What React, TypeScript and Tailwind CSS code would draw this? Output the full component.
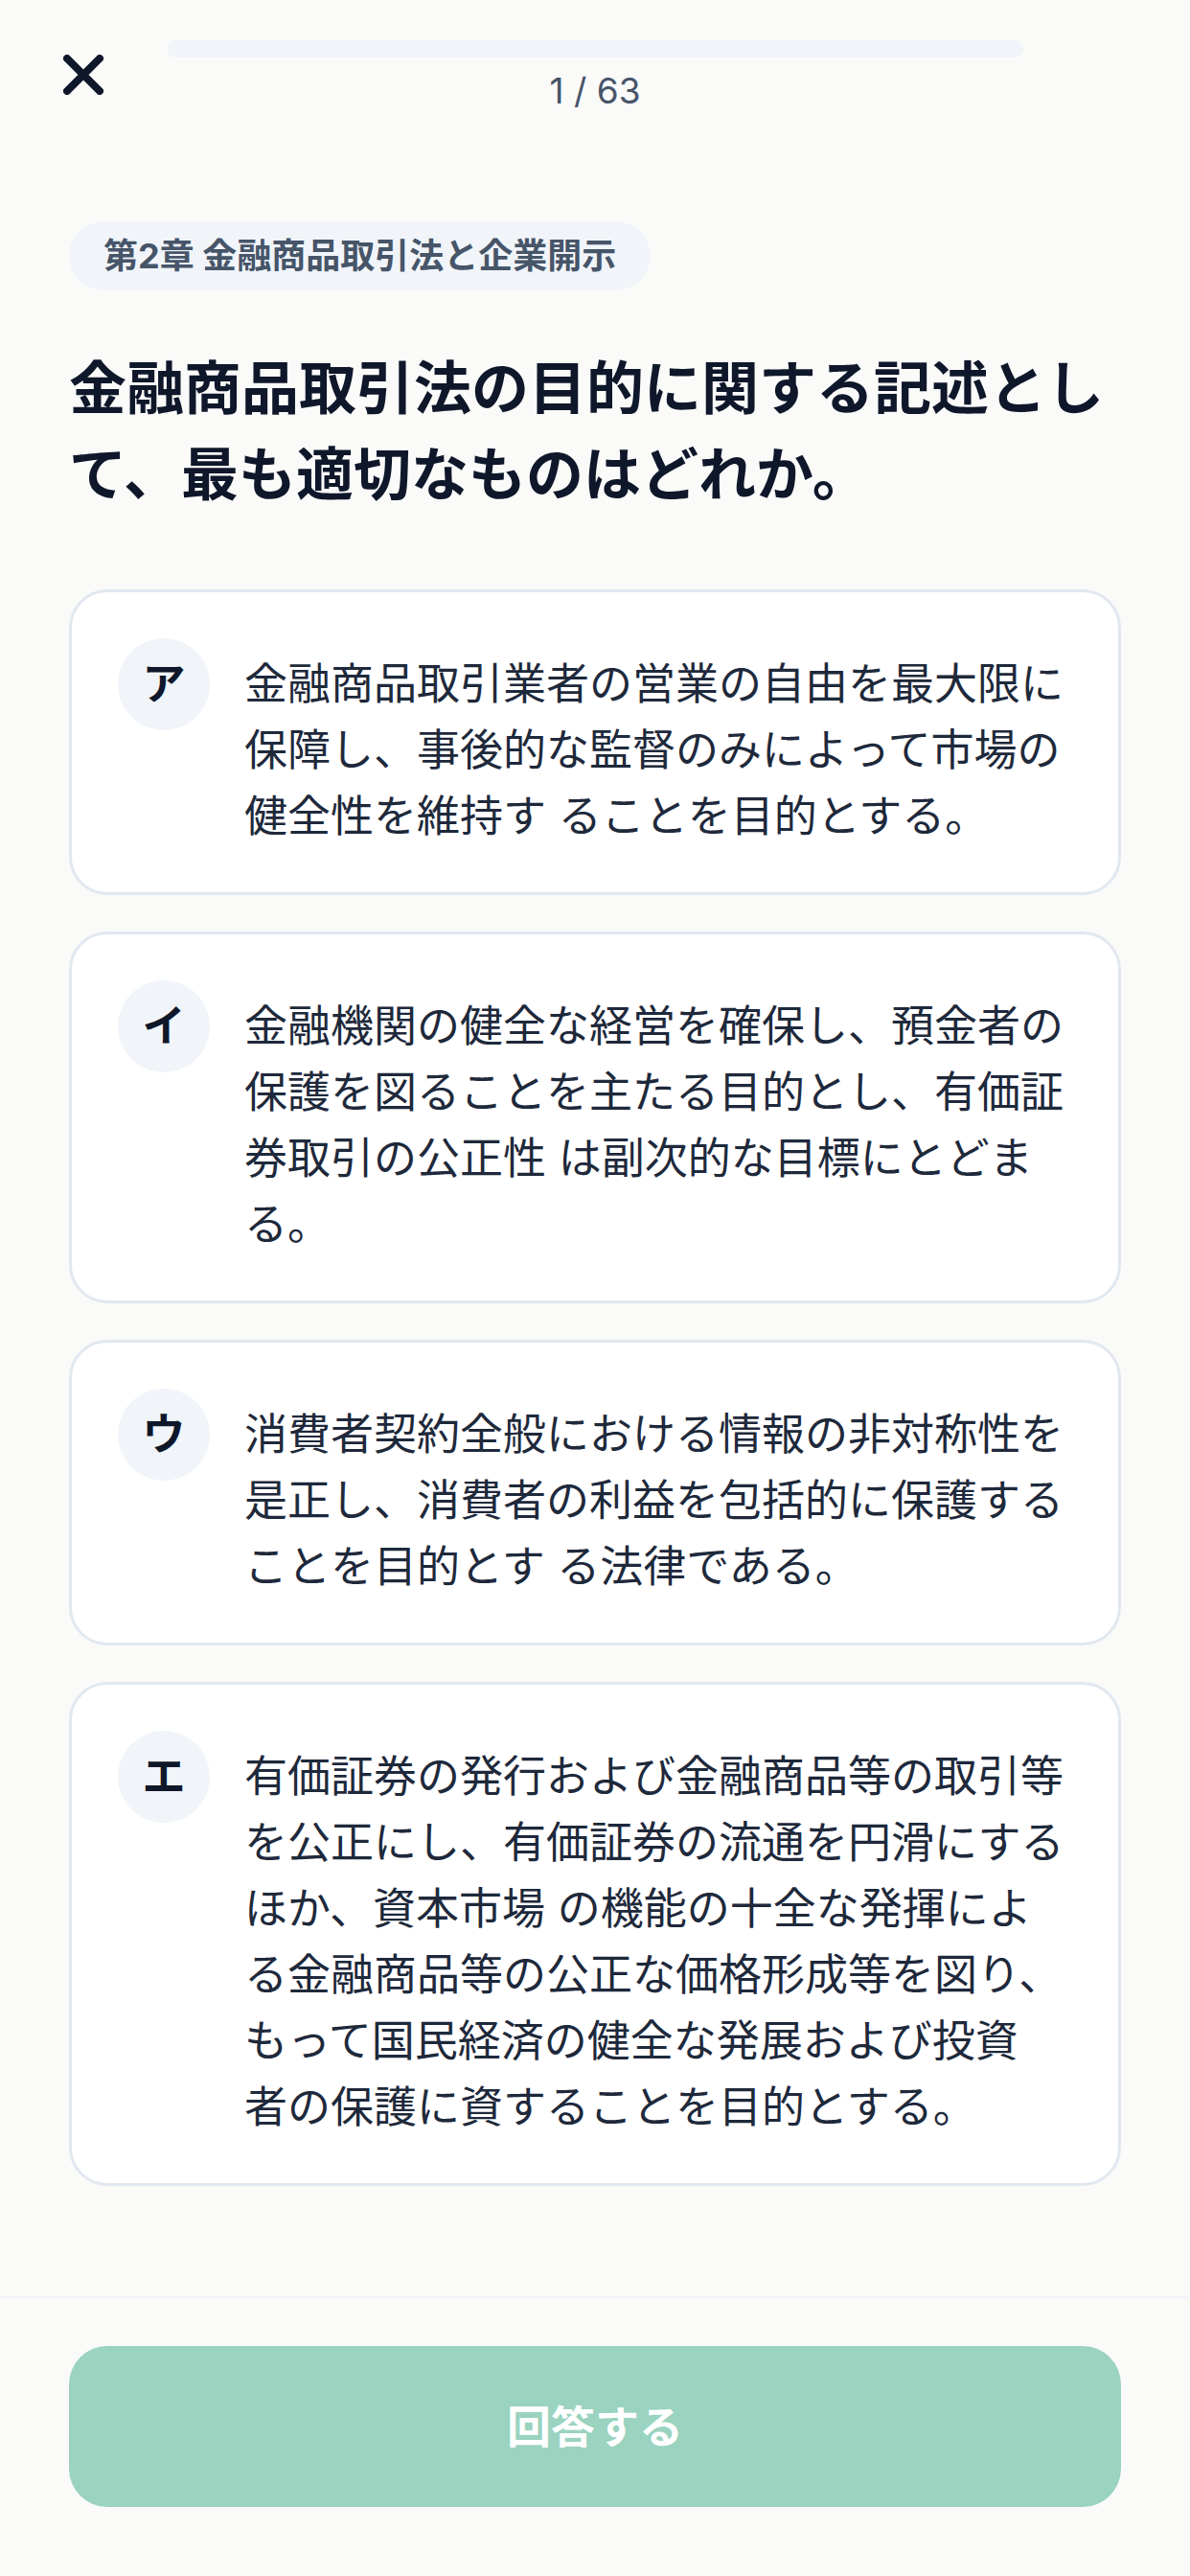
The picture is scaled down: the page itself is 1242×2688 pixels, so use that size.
import React from "react";

type Choice = {
  label: string;
  lines: string[];
};

const choices: Choice[] = [
  {
    label: "ア",
    lines: [
      "金融商品取引業者の営業の自由を最大限に",
      "保障し、事後的な監督のみによって市場の",
      "健全性を維持す ることを目的とする。",
    ],
  },
  {
    label: "イ",
    lines: [
      "金融機関の健全な経営を確保し、預金者の",
      "保護を図ることを主たる目的とし、有価証",
      "券取引の公正性 は副次的な目標にとどま",
      "る。",
    ],
  },
  {
    label: "ウ",
    lines: [
      "消費者契約全般における情報の非対称性を",
      "是正し、消費者の利益を包括的に保護する",
      "ことを目的とす る法律である。",
    ],
  },
  {
    label: "エ",
    lines: [
      "有価証券の発行および金融商品等の取引等",
      "を公正にし、有価証券の流通を円滑にする",
      "ほか、資本市場 の機能の十全な発揮によ",
      "る金融商品等の公正な価格形成等を図り、",
      "もって国民経済の健全な発展および投資",
      "者の保護に資することを目的とする。",
    ],
  },
];

const CloseIcon = () => (
  <svg width="42" height="42" viewBox="0 0 42 42" fill="none">
    <path
      d="M4 4L38 38M38 4L4 38"
      stroke="#0f172a"
      strokeWidth="8"
      strokeLinecap="round"
    />
  </svg>
);

const ChoiceCard = ({ choice }: { choice: Choice }) => (
  <div className="flex gap-[36px] rounded-[40px] border-[3px] border-[#e2e8f0] bg-white px-[48px] pt-[48px] pb-[45px]">
    <div className="flex h-[96px] w-[96px] shrink-0 items-center justify-center rounded-full bg-[#f1f5f9] text-[45px] font-bold text-[#0f172a]">
      {choice.label}
    </div>
    <p className="mt-[13px] text-[45px] leading-[69px] text-[#1e293b] whitespace-nowrap">
      {choice.lines.map((line, i) => (
        <span key={i} className="block">
          {line}
        </span>
      ))}
    </p>
  </div>
);

export default function App() {
  return (
    <div
      className="flex h-screen flex-col bg-[#fafaf9]"
      style={{
        fontFamily: 'Inter, "Noto Sans CJK JP", "Noto Sans", sans-serif',
      }}
    >
      <header className="grid h-[119px] shrink-0 grid-cols-[174px_1fr_174px]">
        <div className="pl-[66px] pt-[57px]">
          <CloseIcon />
        </div>
        <div className="flex flex-col items-center pt-[42px]">
          <div className="h-[18px] w-full rounded-full bg-[#f1f5f9]" />
          <span className="mt-[11px] text-[37px] leading-[48px] text-[#475569]">
            1 / 63
          </span>
        </div>
        <div />
      </header>

      <main className="flex-1 px-[72px] pt-[112px]">
        <div className="inline-flex h-[72px] items-center rounded-full bg-[#f1f5f9] px-[36px] text-[36px] font-bold text-[#475569]">
          第2章 金融商品取引法と企業開示
        </div>
        <h1 className="mt-[57px] text-[60px] font-bold leading-[90px] text-[#0f172a]">
          <span className="block">金融商品取引法の目的に関する記述とし</span>
          <span className="block">て、最も適切なものはどれか。</span>
        </h1>
        <div className="mt-[75px] flex flex-col gap-[38px]">
          {choices.map((c) => (
            <ChoiceCard key={c.label} choice={c} />
          ))}
        </div>
      </main>

      <footer className="shrink-0 border-t-[3px] border-[#f1f5f9] px-[72px] pt-[49px] pb-[72px]">
        <button className="flex h-[168px] w-full items-center justify-center rounded-[40px] bg-[#9ad3bf] text-[46px] font-bold text-white">
          回答する
        </button>
      </footer>
    </div>
  );
}
